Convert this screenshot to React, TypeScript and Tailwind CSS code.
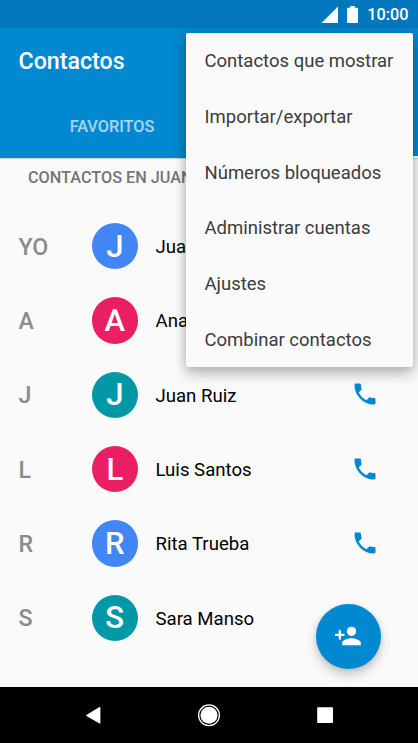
const menuItems = [
  "Contactos que mostrar",
  "Importar/exportar",
  "Números bloqueados",
  "Administrar cuentas",
  "Ajustes",
  "Combinar contactos",
];

const contacts = [
  { section: "YO", initial: "J", name: "Juan", color: "bg-[#4285f4]", phone: false },
  { section: "A", initial: "A", name: "Ana", color: "bg-[#e91e63]", phone: false },
  { section: "J", initial: "J", name: "Juan Ruiz", color: "bg-[#0097a7]", phone: true },
  { section: "L", initial: "L", name: "Luis Santos", color: "bg-[#e91e63]", phone: true },
  { section: "R", initial: "R", name: "Rita Trueba", color: "bg-[#4285f4]", phone: true },
  { section: "S", initial: "S", name: "Sara Manso", color: "bg-[#0097a7]", phone: false },
];

function StatusBar() {
  return (
    <div className="flex h-7 shrink-0 items-center justify-end bg-[#0277bd] pr-[9.5px] text-white">
      <svg className="mr-[9px] h-[17px] w-[17px]" viewBox="0 0 17 17" fill="currentColor">
        <path d="M17 0.5V17H0.5z" />
      </svg>
      <svg className="mr-[9px] h-[17px] w-[11px]" viewBox="0 0 11 17" fill="currentColor">
        <path d="M3.2 0h4.6v1.7h2.3q.9 0 .9.9v13.5q0 .9-.9.9H.9Q0 17 0 16.1V2.6q0-.9.9-.9h2.3z" />
      </svg>
      <span className="pt-0.5 text-[16.3px] leading-none font-medium">10:00</span>
    </div>
  );
}

function Header() {
  return (
    <header className="z-10 flex h-[130px] shrink-0 flex-col bg-[#0288d1] shadow-[0_1px_1px_rgba(0,0,0,0.15)]">
      <div className="flex h-[67px] items-center pt-px pl-[18.5px]">
        <h1 className="text-[23.2px] leading-none font-medium text-white">Contactos</h1>
      </div>
      <div className="flex flex-1">
        <div className="flex w-[224px] items-center justify-center pt-0.5 text-[16.25px] leading-none font-medium text-white/65">
          FAVORITOS
        </div>
        <div className="flex-1 border-b-[2.5px] border-white" />
      </div>
    </header>
  );
}

function PhoneIcon() {
  return (
    <svg className="mb-px h-7 w-7 text-[#0288d1]" viewBox="0 0 24 24" fill="currentColor">
      <path d="M6.62 10.79c1.44 2.83 3.76 5.14 6.59 6.59l2.2-2.2c.27-.27.67-.36 1.02-.24 1.12.37 2.33.57 3.57.57.55 0 1 .45 1 1V20c0 .55-.45 1-1 1-9.39 0-17-7.61-17-17 0-.55.45-1 1-1h3.5c.55 0 1 .45 1 1 0 1.25.2 2.45.57 3.57.11.35.03.74-.25 1.02l-2.2 2.2z" />
    </svg>
  );
}

function ContactRow({ contact }: { contact: (typeof contacts)[0] }) {
  return (
    <li className="flex h-[74.35px] items-center pr-[39.5px]">
      <span className="w-[91.5px] pt-0.5 pl-[18.5px] text-[23.2px] leading-none font-medium text-[#8b8b8b]">
        {contact.section}
      </span>
      <span
        className={`flex h-[46.5px] w-[46.5px] items-center justify-center rounded-full text-[31px] leading-none font-medium text-white ${contact.color}`}
      >
        {contact.initial}
      </span>
      <span className="ml-[17.5px] flex-1 pt-0.5 text-[18.6px] leading-none text-black">{contact.name}</span>
      {contact.phone && <PhoneIcon />}
    </li>
  );
}

function OverflowMenu() {
  return (
    <ul className="absolute top-[32.5px] left-[186px] z-20 w-[227px] rounded-[2px] bg-[#fafafa] shadow-[0_8px_14px_rgba(0,0,0,0.2),0_1px_12px_rgba(0,0,0,0.18)]">
      {menuItems.map((item) => (
        <li
          key={item}
          className="flex h-[55.75px] items-center pt-0.5 pl-[18.5px] text-[18.5px] leading-none whitespace-nowrap text-[#3c3c3c]"
        >
          {item}
        </li>
      ))}
    </ul>
  );
}

function AddButton() {
  return (
    <button
      aria-label="Añadir contacto"
      className="absolute top-[603.5px] left-[316px] z-10 flex h-[65px] w-[65px] items-center justify-center rounded-full bg-[#0288d1] pr-px text-white shadow-[0_6px_11px_rgba(0,0,0,0.2),0_1px_5px_rgba(0,0,0,0.1)]"
    >
      <svg className="h-7 w-7" viewBox="0 0 24 24" fill="currentColor">
        <path d="M15 12c2.21 0 4-1.79 4-4s-1.79-4-4-4-4 1.79-4 4 1.79 4 4 4zm-9-2V7H4v3H1v2h3v3h2v-3h3v-2H6zm9 4c-2.67 0-8 1.34-8 4v2h16v-2c0-2.66-5.33-4-8-4z" />
      </svg>
    </button>
  );
}

function NavigationBar() {
  return (
    <nav className="flex h-14 shrink-0 items-center justify-between bg-black px-[79px] text-white">
      <svg className="h-7 w-7" viewBox="0 0 28 28" fill="currentColor">
        <path d="M21.4 6.6v15.4q0 .8-.8.5L7.4 15.1q-.8-.6 0-1.2L20.6 6.1q.8-.3.8.5z" />
      </svg>
      <svg className="h-7 w-7" viewBox="0 0 28 28">
        <circle cx="14" cy="14.3" r="10.4" fill="none" stroke="currentColor" strokeWidth="1.3" />
        <circle cx="14" cy="14.3" r="8.5" fill="currentColor" />
      </svg>
      <svg className="h-7 w-7" viewBox="0 0 28 28" fill="currentColor">
        <rect x="6.2" y="6.2" width="15.8" height="15.8" rx="0.8" />
      </svg>
    </nav>
  );
}

export default function App() {
  return (
    <div className="relative flex h-[743px] w-[418px] flex-col overflow-hidden bg-[#fafafa] font-[Roboto,sans-serif]">
      <StatusBar />
      <Header />
      <main className="flex-1 overflow-hidden">
        <h2 className="flex h-[51px] items-start pt-3 pl-7 text-[16.25px] leading-none font-medium whitespace-nowrap text-[#757575]">
          CONTACTOS EN JUAN
        </h2>
        <ul>
          {contacts.map((contact) => (
            <ContactRow key={contact.section} contact={contact} />
          ))}
        </ul>
      </main>
      <NavigationBar />
      <AddButton />
      <OverflowMenu />
    </div>
  );
}
